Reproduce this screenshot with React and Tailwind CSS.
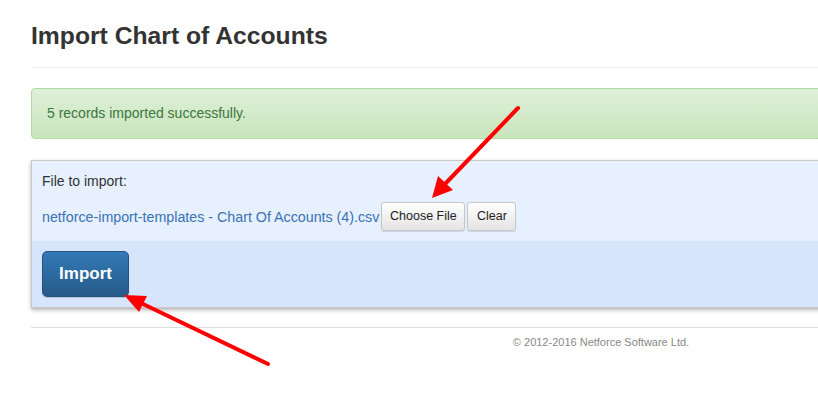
import React from "react";

export default function App() {
  return (
    <div className="relative w-[818px] h-[409px] overflow-hidden bg-white font-['Liberation_Sans',Arial,sans-serif] text-[#333]">
      <div className="ml-[31px] w-[1140px]">
        <h1 className="pt-[22px] text-[24.7px] leading-[28px] font-bold text-[#333]">
          Import Chart of Accounts
        </h1>
        <div className="mt-[17px] border-t border-[#eeeeee]" />

        <div className="mt-[20px] rounded-[4px] border border-[#b2dba1] bg-linear-to-b from-[#dff0d8] to-[#c8e5bc] px-[15px] py-[14px] text-[14px] leading-[21px] text-[#3c763d]">
          5 records imported successfully.
        </div>

        <div className="mt-[21px] border border-[#c9c9c9] shadow-[0_2px_4px_rgba(0,0,0,0.3)]">
          <div className="bg-[#e6f0fe] pl-[10px] pt-[10px] pb-[10px]">
            <div className="text-[14px] leading-[20px] text-[#333]">File to import:</div>
            <div className="mt-[11px] flex items-center h-[29px]">
              <span className="text-[14.25px] text-[#3b72b6] leading-[20px]">
                netforce-import-templates - Chart Of Accounts (4).csv
              </span>
              <button className="ml-[2px] w-[84px] h-[29px] rounded-[3px] border border-[#c6c6c6] bg-linear-to-b from-[#ffffff] to-[#e4e4e4] text-[12.5px] text-[#222] shadow-[0_1px_1px_rgba(0,0,0,0.12)]">
                Choose File
              </button>
              <button className="ml-[2px] w-[49px] h-[29px] rounded-[3px] border border-[#c6c6c6] bg-linear-to-b from-[#ffffff] to-[#e4e4e4] text-[12.5px] text-[#222] shadow-[0_1px_1px_rgba(0,0,0,0.12)]">
                Clear
              </button>
            </div>
          </div>
          <div className="bg-[#d6e5fb] pl-[10px] py-[10px]">
            <button className="w-[87px] h-[46px] rounded-[5px] border border-[#245580] bg-linear-to-b from-[#337ab7] to-[#265a88] text-[17px] font-bold text-white shadow-[0_1px_1px_rgba(0,0,0,0.15)]">
              Import
            </button>
          </div>
        </div>

        <div className="mt-[19px] border-t border-[#dddddd]" />
        <div className="pt-[4px] text-center text-[11px] leading-[20px] text-[#888]">
          © 2012-2016 Netforce Software Ltd.
        </div>
      </div>

      <svg className="absolute left-0 top-0 pointer-events-none" width="818" height="409">
        <line x1="518" y1="108" x2="446" y2="183" stroke="#ff0000" strokeWidth="4" strokeLinecap="round" />
        <polygon points="432,198 438,176 453,190" fill="#ff0000" />
        <line x1="268" y1="364" x2="143" y2="304" stroke="#ff0000" strokeWidth="4" strokeLinecap="round" />
        <polygon points="124,295 147,296 139,312" fill="#ff0000" />
      </svg>
    </div>
  );
}
